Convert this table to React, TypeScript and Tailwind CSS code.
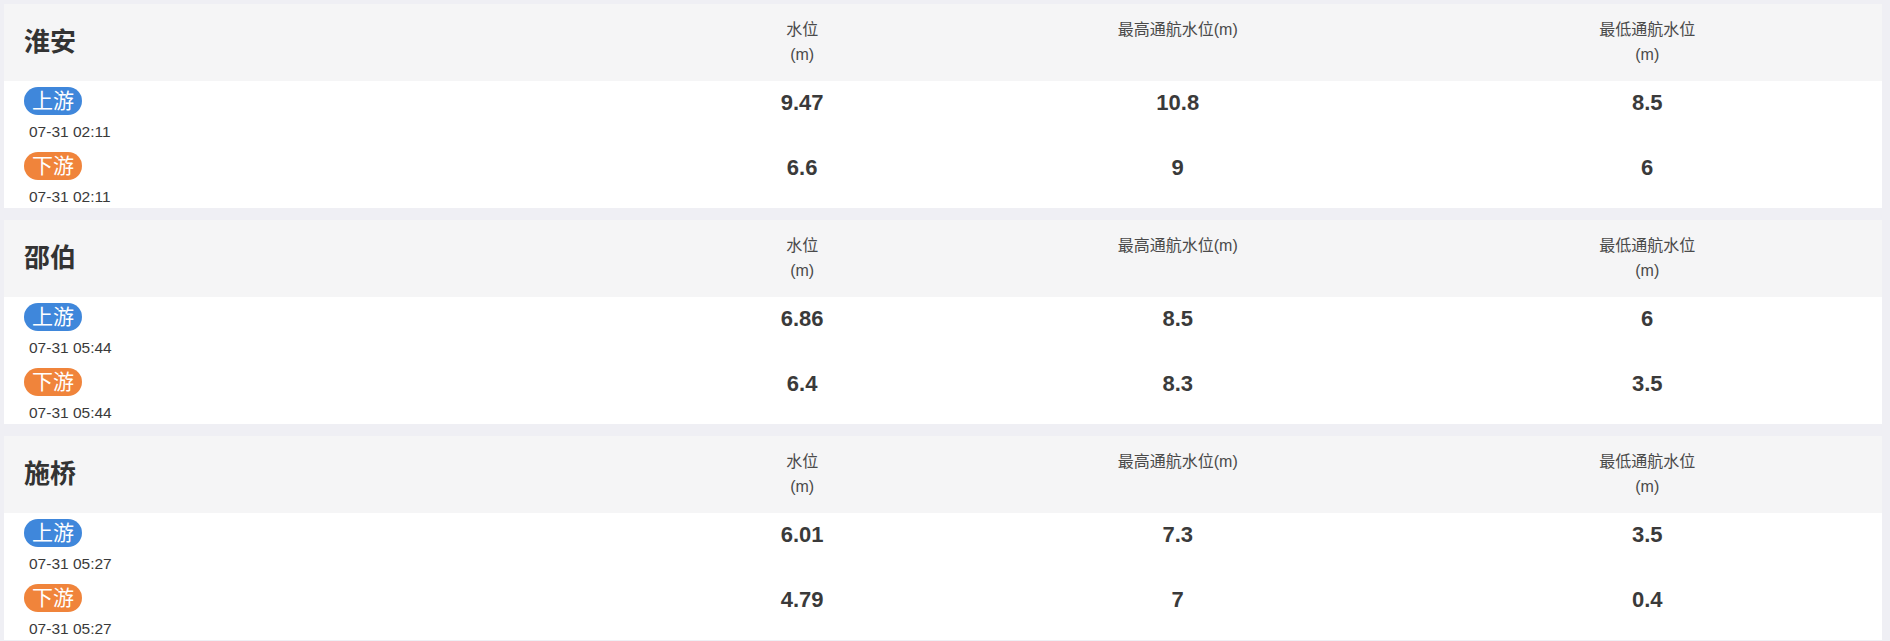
import React from "react";

type Row = { kind: "up" | "down"; time: string; level: string; max: string; min: string };
type Station = { name: string; rows: Row[] };

const stations: Station[] = [
  {
    name: "淮安",
    rows: [
      { kind: "up", time: "07-31 02:11", level: "9.47", max: "10.8", min: "8.5" },
      { kind: "down", time: "07-31 02:11", level: "6.6", max: "9", min: "6" },
    ],
  },
  {
    name: "邵伯",
    rows: [
      { kind: "up", time: "07-31 05:44", level: "6.86", max: "8.5", min: "6" },
      { kind: "down", time: "07-31 05:44", level: "6.4", max: "8.3", min: "3.5" },
    ],
  },
  {
    name: "施桥",
    rows: [
      { kind: "up", time: "07-31 05:27", level: "6.01", max: "7.3", min: "3.5" },
      { kind: "down", time: "07-31 05:27", level: "4.79", max: "7", min: "0.4" },
    ],
  },
];

const FONT = { fontFamily: '"Liberation Sans", Arial, "Noto Sans CJK SC", sans-serif' };

function Card({ s }: { s: Station }) {
  return (
    <div className="mb-[12.5px]">
      <div className="grid grid-cols-[35%_15%_25%_25%] h-[77px] bg-[#f5f5f6]">
        <div className="flex items-center pl-[20px] text-[26px] font-bold text-[#333333]">{s.name}</div>
        <div className="pt-[13px] text-center text-[16px] leading-[25px] text-[#4a4a4a]">
          水位
          <br />
          (m)
        </div>
        <div className="pt-[13px] text-center text-[16px] leading-[25px] text-[#4a4a4a]">最高通航水位(m)</div>
        <div className="pt-[13px] text-center text-[16px] leading-[25px] text-[#4a4a4a]">
          最低通航水位
          <br />
          (m)
        </div>
      </div>
      <div className="bg-white pt-[6px] pb-[0.5px] flex flex-col gap-[10px]">
        {s.rows.map((r, i) => (
          <div key={i} className="grid grid-cols-[35%_15%_25%_25%]">
            <div className="pl-[20px] flex flex-col items-start">
              <div
                className={
                  "h-[28px] w-[58px] rounded-full text-white text-[21px] leading-[28px] text-center " +
                  (r.kind === "up" ? "bg-[#3f87db]" : "bg-[#f0843b]")
                }
              >
                {r.kind === "up" ? "上游" : "下游"}
              </div>
              <div className="mt-[7px] pl-[5px] text-[15.5px] leading-[20px] text-[#3a3a3a]">{r.time}</div>
            </div>
            <div className="text-center text-[22px] font-bold leading-[32px] text-[#3a3a3a]">{r.level}</div>
            <div className="text-center text-[22px] font-bold leading-[32px] text-[#3a3a3a]">{r.max}</div>
            <div className="text-center text-[22px] font-bold leading-[32px] text-[#3a3a3a]">{r.min}</div>
          </div>
        ))}
      </div>
    </div>
  );
}

export default function App() {
  return (
    <div className="min-h-screen bg-[#efeff4] pt-[4px] pl-[4px] pr-[8px]" style={FONT}>
      {stations.map((s) => (
        <Card key={s.name} s={s} />
      ))}
    </div>
  );
}
